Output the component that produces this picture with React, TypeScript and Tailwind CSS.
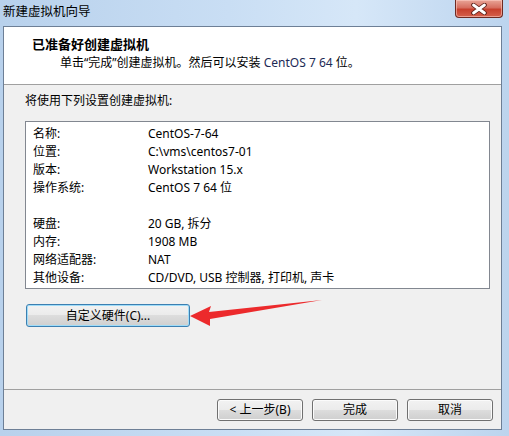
import React from 'react';

const rows: [string, string][] = [
  ['名称:', 'CentOS-7-64'],
  ['位置:', 'C:\\vms\\centos7-01'],
  ['版本:', 'Workstation 15.x'],
  ['操作系统:', 'CentOS 7 64 位'],
  ['', ''],
  ['硬盘:', '20 GB, 拆分'],
  ['内存:', '1908 MB'],
  ['网络适配器:', 'NAT'],
  ['其他设备:', 'CD/DVD, USB 控制器, 打印机, 声卡'],
];

const btn =
  'h-[22px] rounded-[3px] border border-[#707070] bg-[linear-gradient(#f2f2f2,#ebebeb_50%,#dddddd_50%,#cfcfcf)] shadow-[inset_0_0_0_1px_#fbfbfb] text-[12px] leading-none text-black flex items-center justify-center';

export default function App() {
  return (
    <div className="relative w-[509px] h-[436px] overflow-hidden bg-[linear-gradient(90deg,#b8d1ec,#c9def4_45%,#d6e7f8_70%,#bcd4ee)] font-['Segoe_UI','Noto_Sans','Noto_Sans_CJK_SC',sans-serif] text-[12px] text-black">
      {/* title bar */}
      <div className="h-[26px] flex items-center pl-[3px] pb-[1px]">
        <span className="text-[12.5px] leading-none text-black">新建虚拟机向导</span>
      </div>
      <div className="absolute left-[455px] top-0 w-[48px] h-[18px] rounded-b-[4px] border border-t-0 border-[#6e2a22] bg-[linear-gradient(#e9a597,#d66e5f_45%,#c7402d_55%,#d5604c)] shadow-[inset_0_0_0_1px_rgba(255,210,200,0.55)] flex items-center justify-center">
        <svg width="18" height="12" viewBox="0 0 18 12">
          <path d="M3.5 2 L14.5 10 M14.5 2 L3.5 10" stroke="#5a1d16" strokeWidth="4.6" strokeLinecap="round" />
          <path d="M3.5 2 L14.5 10 M14.5 2 L3.5 10" stroke="#ffffff" strokeWidth="2.8" strokeLinecap="round" />
        </svg>
      </div>

      {/* client area */}
      <div className="ml-[3px] w-[499px] h-[404px] border border-[#6d7f96] flex flex-col">
        <div className="h-[58px] bg-white border-b border-[#a0a0a0] pl-[28px] pt-[10px]">
          <div className="font-bold text-[13px] leading-[14px]">已准备好创建虚拟机</div>
          <div className="mt-[5px] pl-[28px] leading-[14px]">
            单击“完成”创建虚拟机。然后可以安装 <span className="text-[#1d2a55]">CentOS 7 64</span> 位。
          </div>
        </div>

        <div className="h-[304px] bg-[#f0f0f0] pl-[21px] pt-[8px] flex flex-col">
          <div className="leading-[16px]">将使用下列设置创建虚拟机:</div>
          <div className="mt-[12px] w-[465px] h-[168px] bg-white border border-[#828790] pt-[3px] pl-[7px]">
            {rows.map(([k, v], i) => (
              <div key={i} className="h-[18px] flex items-center leading-none">
                <span className="w-[115px] shrink-0">{k}</span>
                <span>{v}</span>
              </div>
            ))}
          </div>
          <button className="mt-[15px] ml-[1px] w-[164px] h-[23px] rounded-[3px] border border-[#3c7fb1] bg-[linear-gradient(#f2f2f2,#ebebeb_50%,#dddddd_50%,#cfcfcf)] shadow-[inset_0_0_0_1px_#9fdcf8] text-[12px] leading-none flex items-center justify-center">
            自定义硬件(C)...
          </button>
        </div>

        <div className="h-px bg-[#a0a0a0]" />

        <div className="flex-1 bg-[#f0f0f0] flex justify-end items-start pt-[9px] pr-[8px] gap-[9px]">
          <button className={`${btn} w-[86px]`}>&lt; 上一步(B)</button>
          <button className={`${btn} w-[86px]`}>完成</button>
          <button className={`${btn} w-[86px]`}>取消</button>
        </div>
      </div>

      {/* red annotation arrow */}
      <svg className="absolute left-0 top-0 pointer-events-none" width="509" height="436">
        <polygon
          points="190,316 211,306 209,312 322,300 210,319 210,326"
          fill="#ec2a2c"
        />
      </svg>
    </div>
  );
}
